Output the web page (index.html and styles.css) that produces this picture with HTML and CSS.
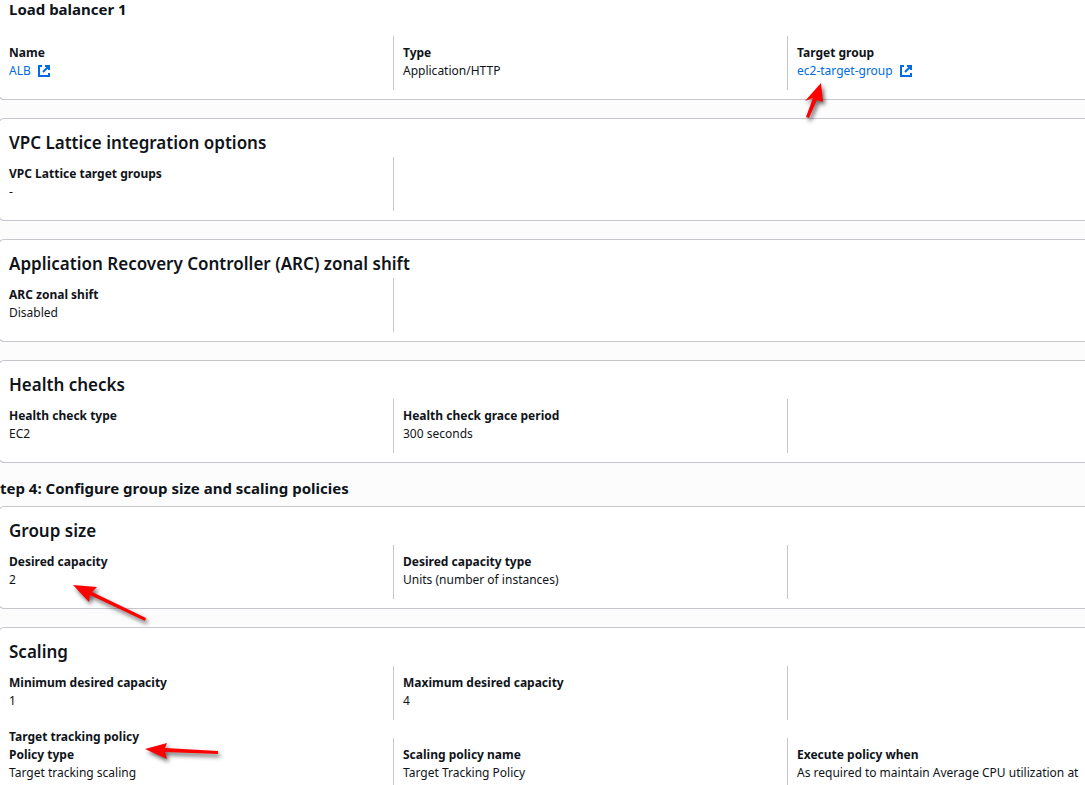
FILE: index.html
```html
<!DOCTYPE html>
<html lang="en">
<head>
<meta charset="utf-8">
<title>Create Auto Scaling group - Review</title>
<link rel="stylesheet" href="styles.css">
</head>
<body>
<main class="page">
  <section class="card card-open">
    <h3 class="subtitle">Load balancer 1</h3>
    <dl class="grid">
      <div class="item"><dt>Name</dt><dd><a class="link" href="#">ALB <svg class="ext" viewBox="0 0 14 14" aria-hidden="true"><path d="M5 2H2v10h10V9M8 2h4v4M12 2L6 8"/></svg></a></dd></div>
      <div class="item"><dt>Type</dt><dd>Application/HTTP</dd></div>
      <div class="item"><dt>Target group</dt><dd><a class="link" href="#">ec2-target-group <svg class="ext" viewBox="0 0 14 14" aria-hidden="true"><path d="M5 2H2v10h10V9M8 2h4v4M12 2L6 8"/></svg></a></dd></div>
    </dl>
  </section>

  <section class="card">
    <h2 class="title">VPC Lattice integration options</h2>
    <dl class="grid">
      <div class="item"><dt>VPC Lattice target groups</dt><dd>-</dd></div>
      <div class="item"></div>
    </dl>
  </section>

  <section class="card">
    <h2 class="title">Application Recovery Controller (ARC) zonal shift</h2>
    <dl class="grid">
      <div class="item"><dt>ARC zonal shift</dt><dd>Disabled</dd></div>
      <div class="item"></div>
    </dl>
  </section>

  <section class="card">
    <h2 class="title">Health checks</h2>
    <dl class="grid">
      <div class="item"><dt>Health check type</dt><dd>EC2</dd></div>
      <div class="item"><dt>Health check grace period</dt><dd>300 seconds</dd></div>
      <div class="item"></div>
    </dl>
  </section>

  <h3 class="step">tep 4: Configure group size and scaling policies</h3>

  <section class="card">
    <h2 class="title">Group size</h2>
    <dl class="grid">
      <div class="item"><dt>Desired capacity</dt><dd>2</dd></div>
      <div class="item"><dt>Desired capacity type</dt><dd>Units (number of instances)</dd></div>
      <div class="item"></div>
    </dl>
  </section>

  <section class="card">
    <h2 class="title">Scaling</h2>
    <dl class="grid">
      <div class="item"><dt>Minimum desired capacity</dt><dd>1</dd></div>
      <div class="item"><dt>Maximum desired capacity</dt><dd>4</dd></div>
      <div class="item"></div>
    </dl>
    <h4 class="policy">Target tracking policy</h4>
    <dl class="grid grid-tight">
      <div class="item"><dt>Policy type</dt><dd>Target tracking scaling</dd></div>
      <div class="item"><dt>Scaling policy name</dt><dd>Target Tracking Policy</dd></div>
      <div class="item"><dt>Execute policy when</dt><dd>As required to maintain Average CPU utilization at</dd></div>
    </dl>
  </section>

  <svg class="arrow arrow-target" viewBox="0 0 30 44" aria-hidden="true"><path d="M21 3L23 22L17 20L9 38L6 37L13 18L5 21Z"/></svg>
  <svg class="arrow arrow-capacity" viewBox="0 0 84 46" aria-hidden="true"><path d="M3 5L27 7L22 12L76 38L75 41L20 15L19 22Z"/></svg>
  <svg class="arrow arrow-policy" viewBox="0 0 84 28" aria-hidden="true"><path d="M5 9L27 3L25 8L78 11L78 14L25 12L27 19Z"/></svg>
</main>
</body>
</html>
```
FILE: styles.css
```css
* { box-sizing: border-box; }

body {
  margin: 0;
  height: 100vh;
  overflow: hidden;
  background: #fcfcfd;
  color: #0f141a;
  font: 12px/18px "Noto Sans", "Open Sans", sans-serif;
}

h2, h3, h4, dl, dd { margin: 0; }

.page { position: relative; }

.card {
  margin: 0 0 18px -2px;
  padding-bottom: 9px;
  background: #fff;
  border: 1px solid #c6c6cd;
  border-right: 0;
  border-radius: 6px 0 0 6px;
}

.card-open {
  border-top: 0;
  border-top-left-radius: 0;
}

.title {
  padding: 12px 10px 2px;
  font-size: 17px;
  line-height: 24px;
  font-weight: 600;
}

.subtitle {
  padding: 0 10px 18px;
  font-size: 15px;
  line-height: 18px;
  font-weight: 700;
}

.step {
  padding-bottom: 11px;
  font-size: 15px;
  line-height: 14px;
  font-weight: 700;
}

.grid {
  display: grid;
  grid-template-columns: 394fr 394fr 298fr;
}

.grid-tight { margin-top: -9px; }

.item {
  min-width: 0;
  min-height: 54px;
  padding: 8px 0 10px 9px;
  border-left: 1px solid #c6c6cd;
}

.item:first-child { border-left-color: transparent; }

dt { font-weight: 700; }

.policy {
  padding: 8px 10px 1px;
  font-size: 12px;
  line-height: 18px;
  font-weight: 700;
}

.link {
  display: inline-flex;
  align-items: center;
  gap: 6px;
  color: #006ce0;
  text-decoration: none;
}

.ext {
  width: 14px;
  height: 14px;
  fill: none;
  stroke: #006ce0;
  stroke-width: 2;
}

.arrow {
  position: absolute;
  fill: #f00;
  overflow: visible;
  filter: drop-shadow(2px 3px 2px rgba(0, 0, 0, 0.6));
}

.arrow-target { left: 800px; top: 80px; width: 30px; height: 44px; }
.arrow-capacity { left: 70px; top: 580px; width: 84px; height: 46px; }
.arrow-policy { left: 140px; top: 740px; width: 84px; height: 28px; }
```
